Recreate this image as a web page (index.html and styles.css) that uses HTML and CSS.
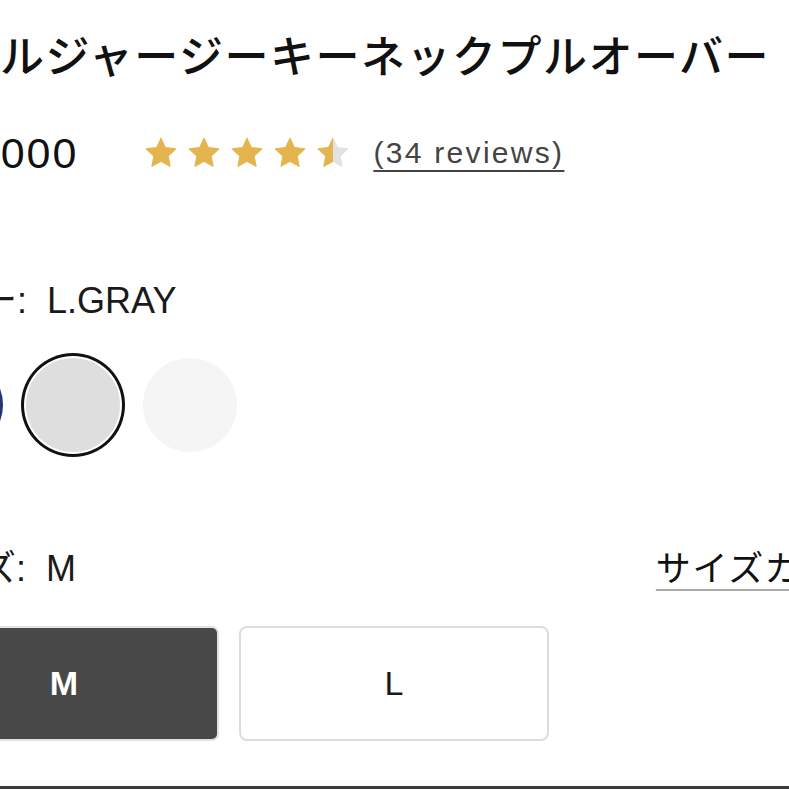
FILE: index.html
```html
<!DOCTYPE html>
<html lang="ja">
<head>
<meta charset="utf-8">
<title>ダブルジャージーキーネックプルオーバー</title>
<link rel="stylesheet" href="styles.css">
</head>
<body>
<div class="page">
  <h1 class="title">ダブルジャージーキーネックプルオーバー</h1>

  <div class="price-row">
    <div class="price">¥12,000</div>
    <div class="stars" aria-label="4.5 / 5">
      <svg class="star" viewBox="0 0 24 24"><polygon class="on" points="12,1.6 15.1,8.2 22.4,9.1 17,14.1 18.4,21.4 12,17.8 5.6,21.4 7,14.1 1.6,9.1 8.9,8.2"/></svg>
      <svg class="star" viewBox="0 0 24 24"><polygon class="on" points="12,1.6 15.1,8.2 22.4,9.1 17,14.1 18.4,21.4 12,17.8 5.6,21.4 7,14.1 1.6,9.1 8.9,8.2"/></svg>
      <svg class="star" viewBox="0 0 24 24"><polygon class="on" points="12,1.6 15.1,8.2 22.4,9.1 17,14.1 18.4,21.4 12,17.8 5.6,21.4 7,14.1 1.6,9.1 8.9,8.2"/></svg>
      <svg class="star" viewBox="0 0 24 24"><polygon class="on" points="12,1.6 15.1,8.2 22.4,9.1 17,14.1 18.4,21.4 12,17.8 5.6,21.4 7,14.1 1.6,9.1 8.9,8.2"/></svg>
      <svg class="star" viewBox="0 0 24 24">
        <defs><clipPath id="half"><rect x="0" y="0" width="12" height="24"/></clipPath></defs>
        <polygon class="off" points="12,1.6 15.1,8.2 22.4,9.1 17,14.1 18.4,21.4 12,17.8 5.6,21.4 7,14.1 1.6,9.1 8.9,8.2"/>
        <polygon class="on" clip-path="url(#half)" points="12,1.6 15.1,8.2 22.4,9.1 17,14.1 18.4,21.4 12,17.8 5.6,21.4 7,14.1 1.6,9.1 8.9,8.2"/>
      </svg>
    </div>
    <a class="reviews" href="#">(34 reviews)</a>
  </div>

  <div class="option-label color-label">
    <span class="option-name">カラー:</span>
    <span class="option-value">L.GRAY</span>
  </div>

  <div class="swatches">
    <span class="swatch navy"></span>
    <span class="swatch lgray selected"></span>
    <span class="swatch white"></span>
  </div>

  <div class="size-head">
    <div class="option-label">
      <span class="option-name">サイズ:</span>
      <span class="option-value">M</span>
    </div>
    <a class="size-guide" href="#">サイズガイド</a>
  </div>

  <div class="sizes">
    <button class="size-btn active">M</button>
    <button class="size-btn">L</button>
  </div>

  <div class="cart-bar"></div>
</div>
</body>
</html>
```
FILE: styles.css
```css
html, body {
  margin: 0;
  padding: 0;
  background: #ffffff;
  overflow: hidden;
  height: 789px;
}

body {
  font-family: "Liberation Sans", "Noto Sans CJK JP", sans-serif;
  color: #151515;
}

.page {
  margin-left: -91px;
  width: 966px;
}

.title {
  margin: 0;
  padding-top: 24px;
  font-family: "Noto Sans CJK JP", sans-serif;
  font-size: 44px;
  font-weight: 500;
  letter-spacing: 1.5px;
  line-height: 60px;
  white-space: nowrap;
  color: #111;
}

.price-row {
  margin-top: 44px;
  height: 50px;
  display: flex;
  align-items: center;
}

.price {
  font-size: 43px;
  letter-spacing: 2px;
  line-height: 50px;
  color: #111;
}

.stars {
  margin-left: 66px;
  display: flex;
  gap: 9px;
  align-items: center;
}

.star {
  width: 34px;
  height: 34px;
  display: block;
}

.star .on {
  fill: #e4b54f;
  stroke: #e4b54f;
  stroke-width: 0.8;
  stroke-linejoin: round;
}

.star .off {
  fill: #e2e2e2;
  stroke: #e2e2e2;
  stroke-width: 0.8;
  stroke-linejoin: round;
}

.reviews {
  margin-left: 23px;
  font-size: 30px;
  letter-spacing: 2.3px;
  line-height: 50px;
  color: #444;
  text-decoration: underline;
  text-decoration-thickness: 2px;
  text-underline-offset: 7px;
}

.option-label {
  display: flex;
  align-items: baseline;
  gap: 20px;
  font-size: 36px;
  line-height: 44px;
  color: #1a1a1a;
}

.color-label {
  margin-top: 101px;
}

.option-name {
  white-space: nowrap;
}

.swatches {
  margin-top: 35px;
  display: flex;
  gap: 23px;
}

.swatch {
  width: 94px;
  height: 94px;
  border-radius: 50%;
  display: block;
}

.swatch.navy {
  background: #22347c;
}

.swatch.lgray {
  background: #dedede;
}

.swatch.white {
  background: #f5f5f5;
}

.swatch.selected {
  box-shadow: 0 0 0 2px #ffffff, 0 0 0 5px #111111;
}

.size-head {
  margin-top: 92px;
  display: flex;
  justify-content: space-between;
  align-items: baseline;
}

.size-guide {
  font-family: "Noto Sans CJK JP", sans-serif;
  font-size: 35px;
  letter-spacing: 1.7px;
  line-height: 44px;
  color: #111;
  text-decoration: underline;
  text-decoration-color: #aaaaaa;
  text-decoration-thickness: 2px;
  text-underline-offset: 8px;
}

.sizes {
  margin-top: 35px;
  display: flex;
  gap: 20px;
}

.size-btn {
  width: 310px;
  height: 115px;
  border: 2px solid #dddddd;
  border-radius: 8px;
  background: #ffffff;
  font-family: "Liberation Sans", sans-serif;
  font-size: 34px;
  color: #1a1a1a;
  padding: 0;
}

.size-btn.active {
  background: #484848;
  border-color: #e2e2e2;
  color: #ffffff;
  font-weight: 700;
  border-radius: 7px;
}

.cart-bar {
  margin-top: 45px;
  height: 60px;
  background: #3c3c3c;
}
```
